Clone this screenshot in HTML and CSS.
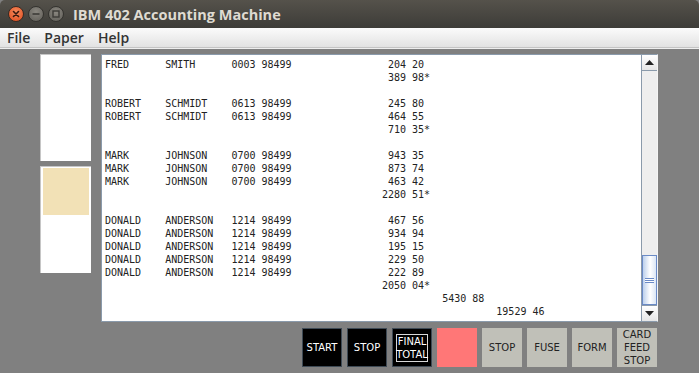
FILE: index.html
```html
<!DOCTYPE html>
<html>
<head>
<meta charset="utf-8">
<link rel="stylesheet" href="styles.css">
</head>
<body>
<div class="window">
  <div class="titlebar">
    <div class="wbtns">
      <span class="wbtn close"><svg width="14" height="14" viewBox="0 0 14 14"><path d="M4.5 4.5 L9.5 9.5 M9.5 4.5 L4.5 9.5" stroke="#3a1a10" stroke-width="1.6" stroke-linecap="round"/></svg></span>
      <span class="wbtn"><svg width="14" height="14" viewBox="0 0 14 14"><path d="M3.5 7 H10.5" stroke="#3c3b37" stroke-width="1.6"/></svg></span>
      <span class="wbtn"><svg width="14" height="14" viewBox="0 0 14 14"><rect x="4" y="4" width="6" height="6" fill="none" stroke="#3c3b37" stroke-width="1.4"/></svg></span>
    </div>
    <div class="title">IBM 402 Accounting Machine</div>
  </div>
  <div class="menubar">
    <span class="menu">File</span>
    <span class="menu">Paper</span>
    <span class="menu">Help</span>
  </div>
  <div class="main">
    <div class="hoppers">
      <div class="hopper"></div>
      <div class="hopper"><div class="card"></div></div>
    </div>
    <div class="scrollpane">
<pre class="printout">FRED      SMITH      0003 98499                204 20
                                               389 98*

ROBERT    SCHMIDT    0613 98499                245 80
ROBERT    SCHMIDT    0613 98499                464 55
                                               710 35*

MARK      JOHNSON    0700 98499                943 35
MARK      JOHNSON    0700 98499                873 74
MARK      JOHNSON    0700 98499                463 42
                                              2280 51*

DONALD    ANDERSON   1214 98499                467 56
DONALD    ANDERSON   1214 98499                934 94
DONALD    ANDERSON   1214 98499                195 15
DONALD    ANDERSON   1214 98499                229 50
DONALD    ANDERSON   1214 98499                222 89
                                              2050 04*
                                                        5430 88
                                                                 19529 46</pre>
      <div class="vscroll">
        <div class="sbtn up"><svg width="9" height="5" viewBox="0 0 9 5"><path d="M0 5 L4.5 0 L9 5 Z" fill="#222"/></svg></div>
        <div class="track">
          <div class="thumb"><span class="grip"></span></div>
        </div>
        <div class="sbtn down"><svg width="9" height="5" viewBox="0 0 9 5"><path d="M0 0 L4.5 5 L9 0 Z" fill="#222"/></svg></div>
      </div>
    </div>
  </div>
  <div class="controls">
    <div class="key dark">START</div>
    <div class="key dark">STOP</div>
    <div class="key dark"><div class="framed">FINAL<br>TOTAL</div></div>
    <div class="key red"></div>
    <div class="key light">STOP</div>
    <div class="key light">FUSE</div>
    <div class="key light">FORM</div>
    <div class="key light">CARD<br>FEED<br>STOP</div>
  </div>
</div>
</body>
</html>
```
FILE: styles.css
```css
html, body {
  margin: 0;
  padding: 0;
}
body {
  width: 699px;
  height: 373px;
  overflow: hidden;
  background: #808080;
}
.window {
  width: 699px;
  height: 373px;
  background: #808080;
  display: flex;
  flex-direction: column;
}
.titlebar {
  height: 28px;
  background: linear-gradient(#55524b, #3d3c38);
  border-radius: 5px 5px 0 0;
  display: flex;
  align-items: center;
  box-sizing: border-box;
}
.wbtns {
  display: flex;
  gap: 4px;
  margin-left: 8px;
  width: 58px;
}
.wbtn {
  width: 14px;
  height: 14px;
  border-radius: 50%;
  background: radial-gradient(circle at 50% 35%, #8a8780, #5e5c56);
  border: 1px solid #34332f;
  display: flex;
  align-items: center;
  justify-content: center;
}
.wbtn.close {
  background: radial-gradient(circle at 50% 35%, #f58a5c, #e04a1c);
  border-color: #3a2a22;
}
.title {
  margin-left: 7px;
  font-family: "Open Sans", "DejaVu Sans", sans-serif;
  font-weight: 700;
  font-size: 14.5px;
  color: #dfdbd2;
}
.menubar {
  height: 19px;
  background: linear-gradient(#fbfbfb, #e2e2e2);
  border-bottom: 1px solid #c4c4c4;
  box-shadow: 0 1px 0 #eeeeee;
  display: flex;
  align-items: center;
  padding-left: 7px;
  gap: 14px;
  margin-bottom: 1px;
}
.menu {
  font-family: "Open Sans", "DejaVu Sans", sans-serif;
  font-weight: 600;
  font-size: 14px;
  color: #333333;
}
.main {
  display: flex;
  margin-top: 5px;
  padding-left: 40px;
  gap: 10px;
}
.hoppers {
  display: flex;
  flex-direction: column;
  gap: 5px;
}
.hopper {
  width: 49px;
  height: 105px;
  background: #ffffff;
  border-top: 1px solid #c6c6c6;
  border-left: 1px solid #c6c6c6;
  box-sizing: content-box;
  padding: 1px 0 0 1px;
  box-shadow: inset 1px 1px 0 #ffffff;
}
.card {
  width: 46px;
  height: 47px;
  margin-left: 1px;
  background: #f2e1b6;
}
.scrollpane {
  width: 555px;
  height: 266px;
  border: 1px solid #8a9aab;
  border-right-color: #f4f4f4;
  border-bottom-color: #8a9aab;
  background: #ffffff;
  display: flex;
}
.printout {
  flex: 1;
  margin: 0;
  padding: 3px 0 0 3px;
  font-family: "DejaVu Sans Mono", monospace;
  font-size: 10px;
  line-height: 13px;
  color: #222222;
  overflow: hidden;
}
.vscroll {
  width: 15px;
  display: flex;
  flex-direction: column;
  border-left: 1px solid #8a9aab;
  background: #eeeeee;
}
.sbtn {
  height: 15px;
  background: linear-gradient(#ffffff, #e6e6e6);
  display: flex;
  align-items: center;
  justify-content: center;
}
.sbtn.up {
  border-bottom: 1px solid #8a9aab;
}
.sbtn.down {
  border-top: 1px solid #8a9aab;
}
.track {
  flex: 1;
  display: flex;
  flex-direction: column;
  justify-content: flex-end;
}
.thumb {
  height: 50px;
  box-sizing: border-box;
  border: 1px solid #6a8ac6;
  background: linear-gradient(90deg, #bcd0ec, #ffffff 55%, #dbe6f5);
  display: flex;
  align-items: center;
  justify-content: center;
}
.grip {
  width: 9px;
  height: 5px;
  background: repeating-linear-gradient(#6a8ac6 0 1px, #ffffff 1px 2px);
}
.controls {
  display: flex;
  gap: 5px;
  margin-top: 6px;
  padding-left: 302px;
}
.key {
  width: 40px;
  height: 39px;
  box-sizing: border-box;
  display: flex;
  align-items: center;
  justify-content: center;
  text-align: center;
  font-family: "DejaVu Sans", sans-serif;
  font-size: 10px;
  line-height: 13px;
}
.key.dark {
  background: #000000;
  color: #ffffff;
  border: 1px solid #3e4a55;
}
.key.red {
  background: #ff7777;
}
.key.light {
  background: #c0c0b8;
  color: #222222;
}
.framed {
  border: 1px solid #d8d8d8;
  width: 32px;
  height: 28px;
  box-sizing: border-box;
  display: flex;
  align-items: center;
  justify-content: center;
  line-height: 13px;
}
```
